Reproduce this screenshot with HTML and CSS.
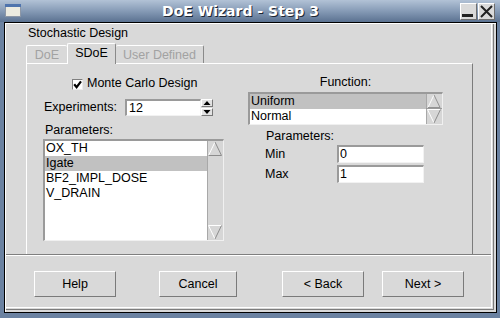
FILE: index.html
```html
<!DOCTYPE html>
<html>
<head>
<meta charset="utf-8">
<link rel="stylesheet" href="styles.css">
</head>
<body>
<div class="window">
  <div class="titlebar">
    <svg class="app-icon" width="16" height="13" viewBox="0 0 16 13">
      <rect x="0.5" y="0.5" width="15" height="12" fill="#ecebe0" stroke="#8d97a6"/>
      <rect x="0" y="0" width="16" height="3" fill="#4f74ad"/>
    </svg>
    <div class="title">DoE Wizard - Step 3</div>
    <div class="wm-btns">
      <div class="wm-btn">
        <svg width="15" height="15" viewBox="0 0 15 15"><rect x="1" y="10" width="11" height="3" fill="#222"/></svg>
      </div>
      <div class="wm-btn">
        <svg width="15" height="15" viewBox="0 0 15 15"><path d="M2 2 L13 13 M13 2 L2 13" stroke="#222" stroke-width="2" fill="none"/></svg>
      </div>
    </div>
  </div>
  <div class="client">
    <div class="main">
      <div class="group-label">Stochastic Design</div>
      <div class="tabs">
        <div class="tab disabled tab-doe">DoE</div>
        <div class="tab active tab-sdoe">SDoE</div>
        <div class="tab disabled tab-user">User Defined</div>
      </div>
      <div class="panel">
        <div class="col-left">
          <div class="check-row">
            <div class="checkbox">
              <svg width="9" height="9" viewBox="0 0 9 9"><polyline points="1.2,4.3 3.6,7.2 8,1.4" stroke="#000" stroke-width="2.2" fill="none"/></svg>
            </div>
            <span>Monte Carlo Design</span>
          </div>
          <div class="exp-row">
            <div class="exp-label">Experiments:</div>
            <div class="spin">
              <div class="spin-input">12</div>
              <div class="spin-btns">
                <div class="spin-btn up"><svg width="10" height="6" viewBox="0 0 10 6"><polygon points="1.5,5 5,1 8.5,5" fill="#000"/></svg></div>
                <div class="spin-btn down"><svg width="10" height="6" viewBox="0 0 10 6"><polygon points="1.5,1 5,5 8.5,1" fill="#000"/></svg></div>
              </div>
            </div>
          </div>
          <div class="params-label">Parameters:</div>
          <div class="list list-params">
            <div class="list-items">
              <div class="item">OX_TH</div>
              <div class="item selected">Igate</div>
              <div class="item">BF2_IMPL_DOSE</div>
              <div class="item">V_DRAIN</div>
            </div>
            <div class="scrollbar">
              <svg class="arrow" width="16" height="15" viewBox="0 0 16 15"><polyline points="1.5,14.5 8,1" stroke="#fff" fill="none"/><polyline points="8,1 14.5,14.5 1.5,14.5" stroke="#8c8c8c" fill="none"/></svg>
              <div class="trough"></div>
              <svg class="arrow" width="16" height="15" viewBox="0 0 16 15"><polyline points="14.5,0.5 1.5,0.5 8,14" stroke="#fff" fill="none"/><polyline points="8,14 14.5,0.5" stroke="#8c8c8c" fill="none"/></svg>
            </div>
          </div>
        </div>
        <div class="col-right">
          <div class="func-label">Function:</div>
          <div class="list list-func">
            <div class="list-items">
              <div class="item selected">Uniform</div>
              <div class="item">Normal</div>
            </div>
            <div class="scrollbar">
              <svg class="arrow" width="16" height="15" viewBox="0 0 16 15"><polyline points="1.5,14.5 8,1" stroke="#fff" fill="none"/><polyline points="8,1 14.5,14.5 1.5,14.5" stroke="#8c8c8c" fill="none"/></svg>
              <svg class="arrow" width="16" height="15" viewBox="0 0 16 15"><polyline points="14.5,0.5 1.5,0.5 8,14" stroke="#fff" fill="none"/><polyline points="8,14 14.5,0.5" stroke="#8c8c8c" fill="none"/></svg>
            </div>
          </div>
          <div class="rparams-label">Parameters:</div>
          <div class="kv-row">
            <div class="kv-label">Min</div>
            <div class="text-field">0</div>
          </div>
          <div class="kv-row second">
            <div class="kv-label">Max</div>
            <div class="text-field">1</div>
          </div>
        </div>
      </div>
    </div>
    <div class="separator"></div>
    <div class="actions">
      <div class="btn btn-help">Help</div>
      <div class="btn btn-cancel">Cancel</div>
      <div class="btn btn-back">&lt; Back</div>
      <div class="btn btn-next">Next &gt;</div>
    </div>
  </div>
</div>
</body>
</html>
```

FILE: styles.css
```css
html, body {
  margin: 0;
  padding: 0;
}
body {
  width: 500px;
  height: 318px;
  overflow: hidden;
  font-family: "Liberation Sans", Arial, sans-serif;
  font-size: 12.5px;
  color: #000;
}
.window {
  width: 500px;
  height: 318px;
  background: #6b82a1;
  display: flex;
  flex-direction: column;
}
.titlebar {
  height: 22px;
  flex: none;
  display: flex;
  align-items: flex-start;
  background: linear-gradient(#b2c2d6, #869bb6 50%, #5b7291);
}
.app-icon {
  display: block;
  margin: 4px 0 0 5px;
}
.title {
  flex: 1;
  text-align: center;
  font-family: "DejaVu Sans", sans-serif;
  font-weight: bold;
  font-size: 14px;
  line-height: 22px;
  color: #fff;
  text-shadow: 1px 1px 0 #1e2633;
}
.wm-btns {
  display: flex;
  gap: 1px;
  margin: 3px 5px 0 0;
}
.wm-btn {
  width: 17px;
  height: 17px;
  box-sizing: border-box;
  background: #dadada;
  border: 1px solid;
  border-color: #fff #6e6e6e #6e6e6e #fff;
}
.wm-btn svg {
  display: block;
}
.client {
  flex: 1;
  margin: 0 3px 5px 4px;
  border: 1px solid #000;
  background: #d9d9d9;
  box-shadow: inset 1px 1px 0 #fff,
              inset -2px -2px 0 #d9d9d9,
              inset -3px -3px 0 #7c7c7c,
              inset -4px -4px 0 #d9d9d9,
              inset -5px -5px 0 #fff;
  display: flex;
  flex-direction: column;
}
.main {
  padding: 3px 0 0 21px;
}
.group-label {
  line-height: 15px;
  padding-left: 2px;
}
.tabs {
  display: flex;
  align-items: flex-end;
  height: 20px;
  margin-top: 2px;
}
.tab {
  box-sizing: border-box;
  height: 18px;
  padding-top: 1px;
  line-height: 16px;
  text-align: center;
  border-top: 1px solid #fff;
  border-left: 1px solid #fff;
  border-right: 1px solid #8a8a8a;
  border-radius: 2px 2px 0 0;
}
.tab.disabled {
  color: #a2a2a2;
}
.tab-doe { width: 41px; border-right: none; }
.tab-user { width: 88px; border-left: none; }
.tab.active {
  width: 49px;
  height: 21px;
  margin-bottom: -1px;
  position: relative;
  z-index: 1;
  background: #d9d9d9;
}
.panel {
  width: 447px;
  height: 191px;
  box-sizing: border-box;
  border-top: 1px solid #fff;
  border-left: 1px solid #fff;
  border-right: 1px solid #7c7c7c;
  padding-left: 16px;
  display: grid;
  grid-template-columns: 181px 195px;
  column-gap: 24px;
  align-items: start;
}
/* left column */
.check-row {
  display: flex;
  align-items: flex-start;
  gap: 4px;
  margin-top: 12px;
  padding-left: 29px;
  line-height: 15px;
  height: 15px;
}
.checkbox {
  width: 11px;
  height: 11px;
  box-sizing: border-box;
  margin-top: 3px;
  background: #fff;
  border: 1px solid;
  border-color: #7f7f7f #ececec #ececec #7f7f7f;
  display: flex;
  align-items: center;
  justify-content: center;
}
.checkbox svg { display: block; }
.exp-row {
  display: flex;
  align-items: center;
  height: 17px;
  margin-top: 8px;
}
.exp-label {
  width: 82px;
  box-sizing: border-box;
  padding-left: 1px;
  line-height: 15px;
}
.spin {
  display: flex;
}
.spin-input {
  width: 76px;
  height: 17px;
  box-sizing: border-box;
  background: #fff;
  border-style: solid;
  border-width: 2px 1px 1px 2px;
  border-color: #9a9a9a #f2f2f2 #f2f2f2 #9a9a9a;
  padding-left: 2px;
  line-height: 14px;
}
.spin-btns {
  display: flex;
  flex-direction: column;
  gap: 1px;
}
.spin-btn {
  width: 12px;
  height: 8px;
  box-sizing: border-box;
  background: #e2e2e2;
  border: 1px solid;
  border-color: #fff #777 #777 #fff;
  display: flex;
  align-items: center;
  justify-content: center;
}
.spin-btn svg { display: block; }
.params-label {
  margin-top: 7px;
  padding-left: 2px;
  line-height: 15px;
}
.list {
  margin-top: 1px;
  box-sizing: border-box;
  border-style: solid;
  border-width: 2px 1px 1px 2px;
  border-color: #9a9a9a #f0f0f0 #f0f0f0 #9a9a9a;
  display: flex;
}
.list-params {
  width: 181px;
  height: 102px;
}
.list-items {
  flex: 1;
  background: #fff;
}
.item {
  line-height: 15px;
  height: 15px;
  padding-left: 1px;
  white-space: nowrap;
}
.item.selected {
  background: #c1c1c1;
}
.scrollbar {
  width: 16px;
  flex: none;
  background: #d6d6d6;
  display: flex;
  flex-direction: column;
  box-shadow: inset 1px 0 0 #a8a8a8;
}
.scrollbar .arrow { display: block; flex: none; }
.trough { flex: 1; }
/* right column */
.func-label {
  margin-top: 11px;
  text-align: center;
  line-height: 15px;
}
.list-func {
  margin-top: 2px;
  width: 195px;
  height: 33px;
}
.list-func .scrollbar .arrow:first-child {
  border-bottom: 1px solid #9a9a9a;
  height: 14px;
}
.rparams-label {
  margin-top: 4px;
  padding-left: 18px;
  line-height: 15px;
}
.kv-row {
  display: flex;
  align-items: center;
  height: 18px;
  margin-top: 1px;
}
.kv-row.second {
  margin-top: 2px;
}
.kv-label {
  width: 89px;
  box-sizing: border-box;
  padding-left: 17px;
  line-height: 15px;
}
.text-field {
  width: 87px;
  height: 18px;
  box-sizing: border-box;
  background: #fff;
  border-style: solid;
  border-width: 2px 1px 1px 2px;
  border-color: #9a9a9a #f2f2f2 #f2f2f2 #9a9a9a;
  padding-left: 1px;
  line-height: 15px;
}
/* bottom */
.separator {
  height: 2px;
  box-sizing: border-box;
  border-top: 1px solid #7f7f7f;
  border-bottom: 1px solid #fff;
  margin: 0 5px 0 1px;
}
.actions {
  display: flex;
  padding-top: 15px;
}
.btn {
  height: 26px;
  box-sizing: border-box;
  border: 1px solid;
  border-color: #fff #7a7a7a #7a7a7a #fff;
  text-align: center;
  line-height: 24px;
}
.btn-help { width: 82px; margin-left: 29px; }
.btn-cancel { width: 78px; margin-left: 43px; }
.btn-back { width: 82px; margin-left: 45px; }
.btn-next { width: 82px; margin-left: 18px; }
```
